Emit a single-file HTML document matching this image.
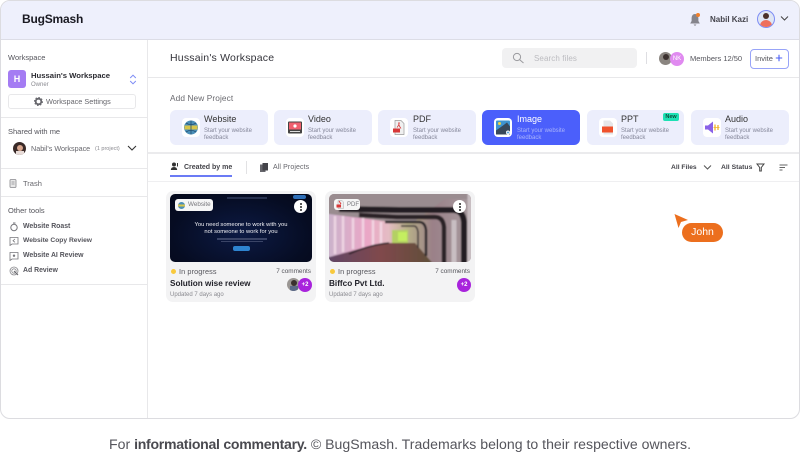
<!DOCTYPE html>
<html><head><meta charset="utf-8">
<style>
html,body{margin:0;padding:0;background:#fff}
body{width:800px;height:452px;overflow:hidden;position:relative;font-family:"Liberation Sans",sans-serif;color:#333}
.a{position:absolute}
.t{position:absolute;white-space:nowrap;line-height:1}
.b{font-weight:700}
.card{position:absolute;top:110px;height:35px;width:98px;background:#eceefc;border-radius:6px}
.ic{position:absolute;left:12px;top:8px;width:18px;height:19px;background:#fff;border-radius:4px}
.ct{position:absolute;left:34px;top:5px;font-size:9px;color:#333;line-height:1;font-weight:400}
.cs{position:absolute;left:34px;top:17.500px;font-size:6px;line-height:7px;color:#85879a;white-space:nowrap}
.pc{position:absolute;top:191px;width:150px;height:111px;background:#f3f3f4;border-radius:7px}
.th{position:absolute;left:4px;top:3px;width:142px;height:68px;border-radius:5px;overflow:hidden}
.dots{position:absolute;top:6px;left:124px;width:13px;height:13px;border-radius:50%;background:#fff}
.dots i{position:absolute;left:5.500px;width:2px;height:2px;border-radius:50%;background:#222}
.hr{position:absolute;height:1px;background:#e8e8ea}
</style></head><body>
<div class="a" style="left:0;top:0;width:798px;height:417px;border:1px solid #dcdce0;border-radius:10px;overflow:hidden;background:#fff">
 <div class="a" style="left:0;top:0;width:798px;height:38px;background:#eef0fc;border-bottom:1px solid #dcdde6"></div>
 <div class="a" style="left:146px;top:39px;width:1px;height:380px;background:#e8e8ea"></div>
</div>

<!-- header -->
<div class="t b" style="left:22px;top:13px;font-size:12px;color:#1a1a22;letter-spacing:-.2px">BugSmash</div>
<svg class="a" style="left:688px;top:12px" width="14" height="15" viewBox="0 0 14 15"><path d="M7 2C4.600 2 3.600 4 3.600 6.500V9L2.200 11.500H11.800L10.400 9V6.500C10.400 4 9.400 2 7 2Z" fill="#85858c"/><path d="M5.500 12.500H8.500L7 14Z" fill="#85858c"/><circle cx="10" cy="3" r="2" fill="#f0802c"/></svg>
<div class="t b" style="left:710px;top:15.500px;font-size:8px;color:#44444c">Nabil Kazi</div>
<div class="a" style="left:757px;top:10px;width:16px;height:16px;border:1px solid #7d8cf5;border-radius:50%;background:#dfe6f4;overflow:hidden"><div class="a" style="left:5px;top:2px;width:6px;height:6px;border-radius:50%;background:#4a3028"></div><div class="a" style="left:2px;top:9px;width:12px;height:8px;border-radius:6px 6px 0 0;background:#ee6f5c"></div></div>
<svg class="a" style="left:780px;top:15px" width="9" height="7" viewBox="0 0 9 7"><path d="M1 1.500L4.500 5L8 1.500" fill="none" stroke="#444" stroke-width="1"/></svg>

<!-- sidebar -->
<div class="t" style="left:8px;top:54px;font-size:7.500px;color:#55555c">Workspace</div>
<div class="a" style="left:8px;top:70px;width:18px;height:18px;border-radius:3px;background:#a47cf3;color:#fff;font-size:9px;font-weight:700;line-height:18px;text-align:center">H</div>
<div class="t b" style="left:31px;top:72px;font-size:7.700px;color:#2a2a30">Hussain's Workspace</div>
<div class="t" style="left:31px;top:82px;font-size:6px;color:#8a8a90">Owner</div>
<svg class="a" style="left:129px;top:74px" width="8" height="11" viewBox="0 0 8 11"><path d="M1.200 4L4 1.200L6.800 4M1.200 7L4 9.800L6.800 7" fill="none" stroke="#7d8cf5" stroke-width="1"/></svg>
<div class="a" style="left:8px;top:94px;width:125.500px;height:13px;border:1px solid #e8e8ea;border-radius:3px"></div>
<svg class="a" style="left:34px;top:97px" width="9" height="9" viewBox="0 0 9 9"><circle cx="4.500" cy="4.500" r="2.800" fill="none" stroke="#66666c" stroke-width="1.800"/><circle cx="4.500" cy="4.500" r="4" fill="none" stroke="#66666c" stroke-width="1" stroke-dasharray="1.500 1.600"/></svg>
<div class="t" style="left:46px;top:98px;font-size:7.300px;color:#66666c">Workspace Settings</div>
<div class="hr" style="left:1px;top:117px;width:146px"></div>
<div class="t" style="left:8px;top:127.500px;font-size:7.500px;color:#55555c">Shared with me</div>
<div class="a" style="left:13px;top:142px;width:13px;height:13px;border-radius:50%;background:#3a2a28;overflow:hidden"><div class="a" style="left:4px;top:3px;width:6px;height:6px;border-radius:50%;background:#d9a78f"></div><div class="a" style="left:3px;top:9px;width:8px;height:5px;background:#e8dcd8"></div></div>
<div class="t" style="left:31px;top:145px;font-size:7.200px;color:#66666c">Nabil's Workspace</div>
<div class="t" style="left:95px;top:146.500px;font-size:5.500px;color:#8a8a90">(1 project)</div>
<svg class="a" style="left:127px;top:145px" width="10" height="7" viewBox="0 0 10 7"><path d="M1 1L5 5L9 1" fill="none" stroke="#333" stroke-width="1.100"/></svg>
<div class="hr" style="left:1px;top:168px;width:146px"></div>
<svg class="a" style="left:9px;top:178px" width="8" height="10" viewBox="0 0 8 10"><rect x="1" y="1.500" width="6" height="8" rx="1" fill="#e8e8e8" stroke="#88888c" stroke-width=".8"/><path d="M2.500 4H5.500M2.500 6H5.500" stroke="#88888c" stroke-width=".7"/></svg>
<div class="t" style="left:23px;top:179.500px;font-size:7.500px;color:#66666c">Trash</div>
<div class="hr" style="left:1px;top:196px;width:146px"></div>
<div class="t" style="left:8px;top:207px;font-size:7.500px;color:#55555c">Other tools</div>
<svg class="a" style="left:9px;top:222px" width="10" height="10" viewBox="0 0 10 10"><circle cx="5" cy="5.500" r="3.200" fill="none" stroke="#77777c" stroke-width="1"/><path d="M4 1H6.500" stroke="#77777c"/></svg>
<div class="t b" style="left:23px;top:223.500px;font-size:6.900px;color:#55555c">Website Roast</div>
<svg class="a" style="left:9px;top:236px" width="10" height="10" viewBox="0 0 10 10"><path d="M1 1.500H9V8H3L1 9.500Z" fill="none" stroke="#77777c" stroke-width=".8"/><path d="M6 3L4 4.700L6 6.300" fill="none" stroke="#77777c" stroke-width=".8"/></svg>
<div class="t b" style="left:23px;top:238px;font-size:6.700px;color:#55555c">Website Copy Review</div>
<svg class="a" style="left:9px;top:251px" width="10" height="10" viewBox="0 0 10 10"><path d="M1 1.500H9V8H3L1 9.500Z" fill="none" stroke="#77777c" stroke-width=".8"/><circle cx="5" cy="4.700" r="1.200" fill="#77777c"/></svg>
<div class="t b" style="left:23px;top:252.500px;font-size:6.900px;color:#55555c">Website AI Review</div>
<svg class="a" style="left:9px;top:266px" width="10" height="10" viewBox="0 0 10 10"><circle cx="5" cy="5" r="4" fill="none" stroke="#88888c" stroke-width=".8"/><circle cx="5" cy="5" r="2.200" fill="none" stroke="#88888c" stroke-width=".8"/><path d="M5 5L9 9" stroke="#66666c" stroke-width="1.100"/></svg>
<div class="t b" style="left:23px;top:267.500px;font-size:6.900px;color:#55555c">Ad Review</div>
<div class="hr" style="left:1px;top:284px;width:146px"></div>

<!-- title row -->
<div class="t" style="left:170px;top:53px;font-size:10.500px;color:#33333a;letter-spacing:.2px">Hussain's Workspace</div>
<div class="a" style="left:502px;top:48px;width:135px;height:20px;background:#f1f1f2;border-radius:4px"></div>
<svg class="a" style="left:512px;top:52px" width="13" height="12" viewBox="0 0 13 12"><circle cx="5" cy="5" r="3.600" fill="none" stroke="#9a9a9e" stroke-width="1"/><path d="M7.700 7.700L11.500 11" stroke="#9a9a9e" stroke-width="1"/></svg>
<div class="t" style="left:534px;top:54.500px;font-size:8px;color:#bcbcc0;letter-spacing:.1px">Search files</div>
<div class="a" style="left:646px;top:52px;width:1px;height:12px;background:#dedee2"></div>
<div class="a" style="left:659px;top:52px;width:13px;height:13px;border-radius:50%;background:#8a8580;overflow:hidden"><div class="a" style="left:4px;top:2px;width:6px;height:6px;border-radius:50%;background:#3c3230"></div></div>
<div class="a" style="left:670px;top:52px;width:14px;height:14px;border-radius:50%;background:#e08af0;color:#fff;font-size:6px;line-height:14px;text-align:center">NK</div>
<div class="t" style="left:690px;top:54.500px;font-size:7.500px;color:#55555c">Members 12/50</div>
<div class="a" style="left:750px;top:49px;width:37px;height:18px;border:1px solid #98a4f8;border-radius:4px"></div>
<div class="t" style="left:755px;top:55px;font-size:7.500px;color:#55555c">Invite</div>
<svg class="a" style="left:775px;top:54px" width="8" height="8" viewBox="0 0 8 8"><path d="M4 .8V7.200M.8 4H7.200" stroke="#4b5ff5" stroke-width="1.100"/></svg>
<div class="hr" style="left:148px;top:77px;width:651px"></div>

<!-- add new -->
<div class="t" style="left:170px;top:93.500px;font-size:8.300px;color:#6a6a70;letter-spacing:.1px">Add New Project</div>

<div class="card" style="left:170px"><div class="ic"><svg width="18" height="19" viewBox="0 0 18 18"><circle cx="9" cy="9" r="7" fill="#4b8fb8"/><path d="M2.500 7H15.500V11H2.500Z" fill="#d8c64a"/><path d="M9 2V16M4 4.500Q9 8 14 4.500M4 13.500Q9 10 14 13.500" stroke="#245070" stroke-width=".8" fill="none"/></svg></div><div class="ct">Website</div><div class="cs">Start your website<br>feedback</div></div>
<div class="card" style="left:274px"><div class="ic"><svg width="18" height="19" viewBox="0 0 18 18"><rect x="2" y="3" width="14" height="12" rx="1" fill="#444"/><rect x="3" y="4" width="12" height="7" fill="#f0606e"/><circle cx="9" cy="7.500" r="1.600" fill="#fff"/><path d="M4 13H14" stroke="#ddd"/></svg></div><div class="ct">Video</div><div class="cs">Start your website<br>feedback</div></div>
<div class="card" style="left:378px"><div class="ic"><svg width="18" height="19" viewBox="0 0 18 18"><path d="M5 2H11L14 5V16H5Z" fill="#f0f0f0" stroke="#999" stroke-width=".7"/><path d="M7 9Q10 5 9 4Q8 6 11 10" fill="none" stroke="#d83838" stroke-width=".8"/><rect x="3" y="10" width="7" height="4" fill="#d83838"/></svg></div><div class="ct" style="left:35px">PDF</div><div class="cs" style="left:35px">Start your website<br>feedback</div></div>
<div class="card" style="left:482px;background:#4b5ffb"><div class="ic"><svg width="18" height="19" viewBox="0 0 18 18"><rect x="2" y="2" width="14" height="14" rx="1" fill="#3f94d0"/><circle cx="5.500" cy="5" r="1.500" fill="#f2d23c"/><path d="M2 16V12L9 7L13 4L16 8V16Z" fill="#38485a"/><circle cx="14" cy="14" r="2" fill="#fff"/><path d="M14 12.800V15.200M12.800 14H15.200" stroke="#3f94d0" stroke-width=".7"/></svg></div><div class="ct" style="color:#fff;left:35px">Image</div><div class="cs" style="color:#a9b3fb;left:35px">Start your website<br>feedback</div></div>
<div class="card" style="left:587px;width:97px"><div class="ic"><svg width="18" height="19" viewBox="0 0 18 18"><path d="M4.500 2H11L14 5V16H4.500Z" fill="#e6e6e8"/><rect x="3" y="8" width="11" height="6" fill="#f0522c"/></svg></div><div class="ct">PPT</div><div class="cs">Start your website<br>feedback</div>
 <div class="a" style="left:76px;top:3px;width:16px;height:8px;background:#1de0b4;border-radius:2px;font-size:5.500px;line-height:8px;text-align:center;color:#0f4a3c;font-weight:700">New</div></div>
<div class="card" style="left:691px"><div class="ic"><svg width="18" height="19" viewBox="0 0 18 18"><path d="M2 7H5L10 3V15L5 11H2Z" fill="#8a62e8"/><path d="M12 6V12M15 6.500V11.500" stroke="#f0b42c" stroke-width="1.300"/><path d="M10.500 9H16.500" stroke="#f0b42c" stroke-width=".8"/></svg></div><div class="ct">Audio</div><div class="cs">Start your website<br>feedback</div></div>

<div class="a" style="left:148px;top:152px;width:651px;height:2px;background:#ebebed"></div>

<!-- tabs -->
<svg class="a" style="left:170px;top:162px" width="10" height="9" viewBox="0 0 10 9"><circle cx="4" cy="2.500" r="2" fill="#333"/><path d="M.8 8Q1 5 4 5Q7 5 7.200 8Z" fill="#333"/><path d="M7.500 1V4.500" stroke="#333"/></svg>
<div class="t b" style="left:184px;top:163.500px;font-size:7px;color:#44444a">Created by me</div>
<div class="a" style="left:170px;top:175px;width:62px;height:1.500px;background:#6b7bf5"></div>
<div class="a" style="left:246px;top:161px;width:1px;height:13px;background:#e2e2e4"></div>
<svg class="a" style="left:259px;top:162px" width="10" height="11" viewBox="0 0 10 11"><rect x="1" y="2.500" width="5.500" height="7.500" fill="#66666c"/><rect x="3.500" y="1" width="5.500" height="7.500" fill="#44444a"/></svg>
<div class="t" style="left:273px;top:164px;font-size:7px;color:#66666c;letter-spacing:.1px">All Projects</div>
<div class="t b" style="left:671px;top:164.500px;font-size:6.700px;color:#44444a">All Files</div>
<svg class="a" style="left:703px;top:164px" width="9" height="7" viewBox="0 0 9 7"><path d="M1 1.500L4.500 5L8 1.500" fill="none" stroke="#555" stroke-width="1"/></svg>
<div class="t b" style="left:721px;top:164.500px;font-size:6.800px;color:#44444a">All Status</div>
<svg class="a" style="left:756px;top:163px" width="9" height="9" viewBox="0 0 9 9"><path d="M1 1H8L5.300 4.500V8H3.700V4.500Z" fill="none" stroke="#444" stroke-width="1"/></svg>
<svg class="a" style="left:779px;top:164px" width="9" height="7" viewBox="0 0 9 7"><path d="M.5 1H8.500M.5 3.500H6M.5 6H3.500" stroke="#666" stroke-width="1"/></svg>
<div class="a" style="left:148px;top:181px;width:651px;height:1px;background:#efeff1"></div>

<!-- card 1 -->
<div class="pc" style="left:166px">
 <div class="th" style="background:radial-gradient(ellipse at 50% 60%,#0c1a44 0%,#060c22 70%,#04081a 100%)">
  <div class="t" style="left:0;width:142px;top:28px;text-align:center;font-size:5.800px;line-height:7px;color:#f2f2f6;white-space:normal">You need someone to work with you<br>not someone to work for you</div>
  <div class="a" style="left:47px;top:44px;width:50px;height:1.500px;background:#3a4466"></div>
  <div class="a" style="left:51px;top:46.500px;width:42px;height:1.500px;background:#3a4466"></div>
  <div class="a" style="left:63px;top:52px;width:17px;height:5px;border-radius:2px;background:#2e84cf"></div>
  <div class="a" style="left:57px;top:3px;width:40px;height:1.500px;background:#26304e"></div>
  <div class="a" style="left:123px;top:1px;width:13px;height:4px;border-radius:2px;background:#2e6fb8"></div>
  <div class="a" style="left:5px;top:5px;width:38px;height:12px;background:#f6f6f6;border-radius:3px"></div>
  <svg class="a" style="left:7px;top:6.500px" width="9" height="9" viewBox="0 0 9 9"><circle cx="4.500" cy="4.500" r="3.500" fill="#4b8fb8"/><path d="M1 3.500H8V5.500H1Z" fill="#d8c64a"/></svg>
  <div class="t" style="left:18px;top:7.500px;font-size:6.300px;color:#77777c">Website</div>
  <div class="dots"><i style="top:2.500px"></i><i style="top:5.500px"></i><i style="top:8.500px"></i></div>
 </div>
 <div class="a" style="left:4.500px;top:78px;width:5px;height:5px;border-radius:50%;background:#f8c93c"></div>
 <div class="t" style="left:13px;top:77px;font-size:7.300px;color:#55555c;letter-spacing:.1px">In progress</div>
 <div class="t" style="right:5px;top:78px;font-size:6.400px;color:#55555c">7 comments</div>
 <div class="t b" style="left:4px;top:88.500px;font-size:8.200px;color:#22222a">Solution wise review</div>
 <div class="t" style="left:4px;top:100.500px;font-size:6px;color:#8a8a90">Updated 7 days ago</div>
 <div class="a" style="left:121px;top:87px;width:13px;height:13px;border-radius:50%;background:#9a9693;overflow:hidden"><div class="a" style="left:4px;top:2px;width:6px;height:6px;border-radius:50%;background:#39302e"></div><div class="a" style="left:3px;top:8px;width:8px;height:5px;background:#5c6a88"></div></div>
 <div class="a" style="left:132px;top:87px;width:14px;height:14px;border-radius:50%;background:#a823dc;color:#fff;font-size:6px;font-weight:700;line-height:14px;text-align:center">+2</div>
</div>

<!-- card 2 -->
<div class="pc" style="left:325px">
 <div class="th" style="background:#9a8a8e">
  <svg class="a" style="left:0;top:0" width="142" height="68" viewBox="0 0 142 68">
   <defs>
    <linearGradient id="g" x1="0" x2="1" y1="0" y2="0"><stop offset="0" stop-color="#c8b4cc"/><stop offset=".28" stop-color="#eaa6c6"/><stop offset=".42" stop-color="#e4bcc4"/><stop offset=".55" stop-color="#b8b088"/><stop offset=".72" stop-color="#9a8088"/><stop offset="1" stop-color="#a89ca0"/></linearGradient>
    <linearGradient id="f" x1="0" x2="1" y1="0" y2="0"><stop offset="0" stop-color="#5e4466"/><stop offset=".5" stop-color="#80484c"/><stop offset="1" stop-color="#5e5038"/></linearGradient>
    <filter id="bl" x="-5%" y="-5%" width="110%" height="110%"><feGaussianBlur stdDeviation=".7"/></filter>
   </defs>
   <g filter="url(#bl)">
   <rect x="-3" y="-3" width="148" height="74" fill="url(#g)"/>
   <path d="M-3 -3H145V5H116L85 28H62L0 20H-3Z" fill="#9a8c90"/>
   <path d="M-3 72V64L30 55L58 49H86L106 72Z" fill="url(#f)"/>
   <path d="M6 22V60M14 22V58M24 24V55M34 24V53M44 26V51M52 28V49" stroke="#f6e2ec" stroke-width="2.500" opacity=".75"/>
   <rect x="63" y="36" width="16" height="13" fill="#b4d064"/>
   <rect x="69" y="38" width="9" height="9" fill="#c4ee60"/>
   <path d="M10 15L70 16H124Q134 16 135 28V72" fill="none" stroke="#201c20" stroke-width="6"/>
   <path d="M30 21L68 23H106Q114 23 115 33V72" fill="none" stroke="#2a2428" stroke-width="4.500"/>
   <path d="M56 28H90Q96 28 97 36V62" fill="none" stroke="#2c262a" stroke-width="2.500"/>
   <path d="M72 32H85Q88 32 89 38V54" fill="none" stroke="#3a3236" stroke-width="1.500"/>
   <path d="M20 60Q40 51 60 49" fill="none" stroke="#241e22" stroke-width="1.500"/>
   <path d="M125 26V72M141 0V72" stroke="#c8bec2" stroke-width="5"/>
   </g>
  </svg>
  <div class="a" style="left:5px;top:5px;width:26px;height:11px;background:#f6f6f6;border-radius:3px"></div>
  <svg class="a" style="left:7px;top:6px" width="8" height="9" viewBox="0 0 8 9"><path d="M2 .5H6L7.500 2V8.500H2Z" fill="#eee" stroke="#999" stroke-width=".4"/><rect x=".5" y="4.500" width="4.500" height="3" fill="#d83838"/><path d="M3 1L5 4" stroke="#d83838"/></svg>
  <div class="t" style="left:18px;top:7.500px;font-size:6px;color:#77777c">PDF</div>
  <div class="dots"><i style="top:2.500px"></i><i style="top:5.500px"></i><i style="top:8.500px"></i></div>
 </div>
 <div class="a" style="left:4.500px;top:78px;width:5px;height:5px;border-radius:50%;background:#f8c93c"></div>
 <div class="t" style="left:13px;top:77px;font-size:7.300px;color:#55555c;letter-spacing:.1px">In progress</div>
 <div class="t" style="right:5px;top:78px;font-size:6.400px;color:#55555c">7 comments</div>
 <div class="t b" style="left:4px;top:88.500px;font-size:8.200px;color:#22222a">Biffco Pvt Ltd.</div>
 <div class="t" style="left:4px;top:100.500px;font-size:6px;color:#8a8a90">Updated 7 days ago</div>
 <div class="a" style="left:132px;top:87px;width:14px;height:14px;border-radius:50%;background:#a823dc;color:#fff;font-size:6px;font-weight:700;line-height:14px;text-align:center">+2</div>
</div>

<!-- cursor -->
<svg class="a" style="left:673px;top:213px" width="16" height="16" viewBox="0 0 16 16"><path d="M1.500 1L15 7L8 9L5.500 15Z" fill="#ec6f1e"/></svg>
<div class="a" style="left:682px;top:223px;width:41px;height:19px;border-radius:10px;background:#ec6f1e;color:#fff;font-size:10.500px;line-height:19px;text-align:center">John</div>

<!-- footer -->
<div class="t" style="left:0;width:800px;top:437px;text-align:center;font-size:14.100px;color:#55555c">For <span class="b" style="color:#4a4a50;letter-spacing:-.28px">informational commentary.</span> © BugSmash. Trademarks belong to their respective owners.</div>
</body></html>
